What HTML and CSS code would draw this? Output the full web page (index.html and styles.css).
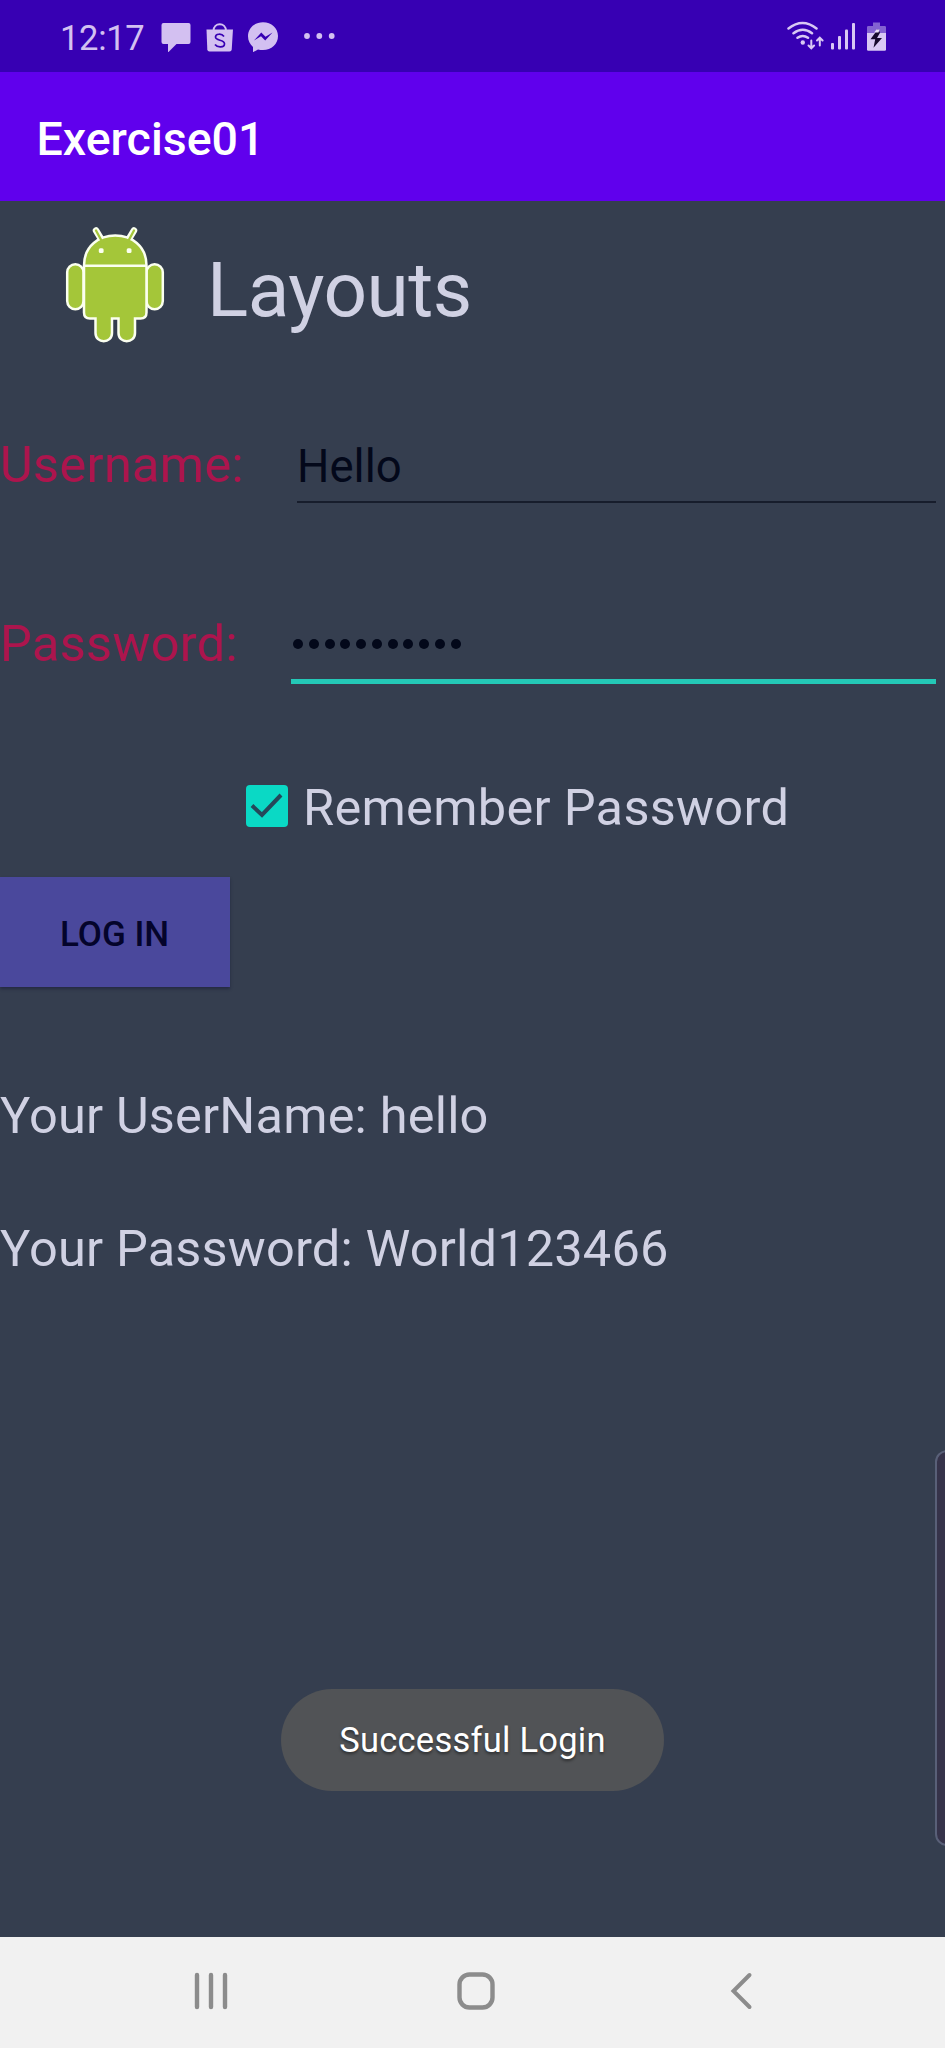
FILE: index.html
```html
<!DOCTYPE html>
<html lang="en">
<head>
<meta charset="utf-8">
<title>Exercise01</title>
<link rel="stylesheet" href="styles.css">
</head>
<body>
<div class="screen">
  <header class="status">
    <span class="time">12:17</span>
    <svg class="notifications" width="180" height="32" viewBox="158 20 180 32">
      <g fill="#d3c0f1">
        <path d="M163.500 23h25q2 0 2 2v17q0 2-2 2h-12l-8.500 8.500V44h-4.500q-2 0-2-2V25q0-2 2-2z"/>
        <path d="M206.500 29.500h26.500l-1.300 20q-.2 2-2.200 2h-20q-2 0-2.200-2z"/>
        <path d="M263 22.200c-8.500 0-15 6-15 14 0 4.500 2 8 5 10.700v5.300l5-2.700c1.500.4 3.200.6 5 .6 8.500 0 15-6 15-14s-6.500-13.900-15-13.900z"/>
        <circle cx="307" cy="36" r="2.900"/><circle cx="319.300" cy="36" r="2.900"/><circle cx="331.700" cy="36" r="2.900"/>
      </g>
      <path d="M213.500 31c0-9 12.500-9 12.500 0" fill="none" stroke="#d3c0f1" stroke-width="2"/>
      <path d="M224 36.500c-2.500-3.500-8.500-2.700-8.500.5 0 4 9 2.500 9 6.700 0 4-7 4.200-9.500.8" fill="none" stroke="#3700b3" stroke-width="1.700"/>
      <path d="M254 40.500l7.300-8 4.200 4.200 7-4.200-7.300 8-4.200-4.200z" fill="#3700b3"/>
    </svg>
    <svg class="signals" width="102" height="34" viewBox="786 20 102 34">
      <g fill="none" stroke="#d9c8f4" stroke-width="2.500" stroke-linecap="round">
        <path d="M788.500 28.500c9-7 19-7 28 0M793.500 33.300c6-4.500 12.500-4.500 18.500 0M797.500 37.800c3.500-2.500 7-2.500 10.500 0"/>
        <path d="M811.300 40.500v7.500M808.500 45.500l2.800 2.800 2.800-2.800M819.800 45.500V38M817 40.500l2.800-2.800 2.800 2.800" stroke-width="2"/>
      </g>
      <g fill="#d9c8f4">
        <circle cx="802.800" cy="42.500" r="2.200"/>
        <rect x="831" y="43" width="3" height="6.500" rx="1"/><rect x="838" y="36" width="3" height="13.500" rx="1"/><rect x="845" y="29.500" width="3" height="20" rx="1"/><rect x="852" y="23" width="3" height="26.500" rx="1"/>
        <path d="M867 33h19v16.500q0 1.300-1.300 1.300h-16.400q-1.300 0-1.300-1.300z"/>
      </g>
      <path d="M873 22.500h7V26h4.700q1.300 0 1.300 1.300V33h-19v-5.700q0-1.300 1.300-1.300h4.700z" fill="#8462d2"/>
      <path d="M878 29l-7.500 10.200h4.700l-1.700 8.500 8.500-9.700h-5l3-5.200z" fill="#17092d"/><path d="M874 32.500l2.500-3h3l-1 3z" fill="#eadff9"/>
    </svg>
  </header>

  <div class="appbar"><h1>Exercise01</h1></div>

  <main class="content">
    <div class="brand">
      <svg width="106" height="120" viewBox="62 224 106 120">
        <g fill="none" stroke="#fbfff0" stroke-linecap="round">
          <path d="M96 230.500l6 10M134 230.500l-6 10" stroke-width="6.500"/>
        </g>
        <g fill="#a4c639" stroke="#fbfff0" stroke-width="2.500">
          <rect x="67.200" y="264.200" width="16.300" height="45" rx="8.100"/>
          <rect x="146.500" y="264.200" width="16.300" height="45" rx="8.100"/>
          <path d="M84 265.500c0-40 62.500-40 62.500 0v47q0 6-6 6H135v14.500c0 11-16.500 11-16.500 0v-14.500h-6.500v14.500c0 11-16.500 11-16.500 0v-14.500H90q-6 0-6-6z"/>
        </g>
        <path d="M96 230.500l6 11M134 230.500l-6 11" stroke="#a4c639" stroke-width="2.300" stroke-linecap="round"/>
        <path d="M84 265.800h62.500" stroke="#fbfff0" stroke-width="2.600"/>
        <rect x="98.800" y="248.300" width="4.800" height="4.800" rx="1.500" fill="#fbfff0"/><rect x="126.700" y="248.300" width="4.800" height="4.800" rx="1.500" fill="#fbfff0"/>
      </svg>
      <span class="brand-name">Layouts</span>
    </div>

    <div class="field">
      <span class="label">Username:</span>
      <div class="input input-name"><span>Hello</span></div>
    </div>
    <div class="field field-password">
      <span class="label">Password:</span>
      <div class="input input-password">
        <i class="dot"></i><i class="dot"></i><i class="dot"></i><i class="dot"></i><i class="dot"></i><i class="dot"></i><i class="dot"></i><i class="dot"></i><i class="dot"></i><i class="dot"></i><i class="dot"></i>
      </div>
    </div>

    <div class="remember">
      <svg width="42" height="42" viewBox="0 0 42 42"><rect width="42" height="42" rx="4" fill="#0ad9c5"/><path d="M6 20.500l10 9.500L35 10" fill="none" stroke="#25485a" stroke-width="4"/></svg>
      <span class="remember-text">Remember Password</span>
    </div>

    <div class="login">LOG IN</div>

    <p class="result result-name">Your UserName: hello</p>
    <p class="result result-password">Your Password: World123466</p>

    <div class="toast">Successful Login</div>
  </main>

  <nav class="nav">
    <svg width="40" height="44" viewBox="0 0 40 44"><path d="M6 6v32M20 6v32M34 6v32" stroke="#8c8c8c" stroke-width="4.400" stroke-linecap="round"/></svg>
    <svg width="40" height="44" viewBox="0 0 40 44"><rect x="3.500" y="5.500" width="33" height="33" rx="10" fill="none" stroke="#8c8c8c" stroke-width="4.400"/></svg>
    <svg width="40" height="44" viewBox="0 0 40 44"><path d="M28.500 6L12.500 22l16 16" fill="none" stroke="#8c8c8c" stroke-width="4" stroke-linecap="round"/></svg>
  </nav>
  <div class="edge-panel"></div>
</div>
</body>
</html>
```
FILE: styles.css
```css
* { box-sizing: border-box; }
body { margin: 0; }
.screen {
  position: relative;
  display: flex;
  flex-direction: column;
  width: 945px;
  height: 2048px;
  overflow: hidden;
  background: #353e4f;
  color: #d0d1e3;
  font-family: Roboto, "Noto Sans", sans-serif;
  font-size: 50.5px;
  line-height: 60px;
}
svg { display: block; flex: none; }

.status {
  display: flex;
  height: 72px;
  padding: 20px 57px 0 60px;
  background: #3700b3;
}
.time {
  width: 98px;
  font-size: 34.5px;
  line-height: 36px;
  letter-spacing: -0.3px;
  color: #d3c0f1;
}
.signals { margin-left: auto; }

.appbar {
  height: 129px;
  padding: 37px 0 0 36.5px;
  background: #6000ed;
}
.appbar h1 {
  margin: 0;
  font-size: 46.5px;
  font-weight: 500;
  line-height: 60px;
  color: #fff;
}

.content {
  display: flex;
  flex: 1;
  flex-direction: column;
  align-items: flex-start;
}
.brand {
  display: flex;
  height: 178px;
  padding: 23px 0 0 62px;
}
.brand-name {
  margin: 16px 0 0 39px;
  font-size: 76.5px;
  line-height: 100px;
  letter-spacing: -0.5px;
}

.field {
  display: flex;
  align-items: center;
  width: 100%;
  height: 172px;
  padding-right: 9px;
}
.field-password { height: 186px; }
.label {
  color: #ac154d;
  letter-spacing: 0.3px;
}
.input {
  display: flex;
  align-items: center;
  flex: none;
  height: 76px;
  margin-left: auto;
  color: #03081a;
}
.input-name {
  width: 639px;
  padding-top: 6px;
  border-bottom: 2px solid #171d2c;
  font-size: 45.5px;
}
.input-password {
  width: 645px;
  gap: 5.75px;
  height: 80px;
  padding: 4px 0 0 2px;
  border-bottom: 5px solid #24c8b7;
}
.dot {
  width: 10px;
  height: 10px;
  border-radius: 50%;
  background: #03081a;
}

.remember {
  display: flex;
  align-items: center;
  gap: 15px;
  height: 140px;
  padding: 0 0 3px 246px;
  letter-spacing: 0.3px;
}
.remember-text { padding-top: 5px; }

.login {
  width: 230px;
  height: 110px;
  padding: 3px 0 0 60px;
  background: #4a489c;
  box-shadow: 0 2px 3px rgba(15, 18, 50, 0.45);
  color: #04042b;
  font-size: 35px;
  font-weight: 500;
  line-height: 110px;
}

.result {
  margin: 0;
  letter-spacing: 0.18px;
}
.result-name { margin-top: 99px; }
.result-password { margin-top: 73px; }

.toast {
  align-self: center;
  width: 383px;
  height: 102px;
  margin-top: 410px;
  border-radius: 51px;
  background: #515356;
  color: #fff;
  font-size: 34.5px;
  line-height: 102px;
  letter-spacing: 0.25px;
  text-align: center;
  text-shadow: 0 2px 3px rgba(0, 0, 0, 0.45);
}

.nav {
  display: flex;
  justify-content: space-between;
  height: 111px;
  padding: 32px 184px 0 191px;
  background: #f1f1f1;
}

.edge-panel {
  position: absolute;
  top: 1450px;
  right: -14px;
  width: 24px;
  height: 396px;
  border: 2px solid #596078;
  border-radius: 13px;
  background: #36334a;
}
```
